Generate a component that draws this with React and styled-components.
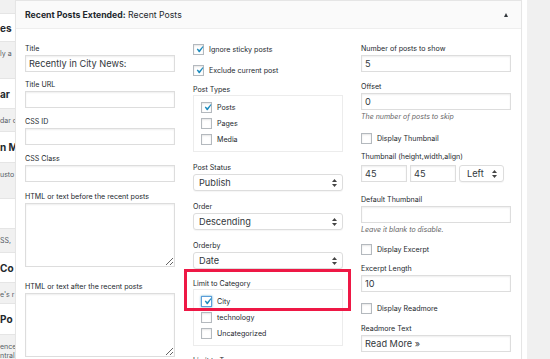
import React from 'react';
import styled, { createGlobalStyle } from 'styled-components';

const GlobalStyle = createGlobalStyle`
  html, body {
    margin: 0;
    padding: 0;
    background: #ffffff;
    font-family: Inter, "Liberation Sans", Arial, sans-serif;
    color: #23282d;
  }
  * { box-sizing: border-box; }
`;

const CheckMark = () => (
  <svg width="13" height="13" viewBox="0 0 20 20">
    <path
      d="M14.83 4.89l1.34.94-5.81 8.38H9.02L5.78 9.67l1.34-1.25 2.57 2.4z"
      fill="#1e8cbe"
    />
  </svg>
);

const SelectArrows = () => (
  <svg width="5" height="8" viewBox="0 0 5 8">
    <path d="M2.5 0L5 3H0z" fill="#444" />
    <path d="M2.5 8L5 5H0z" fill="#444" />
  </svg>
);

const strip = [
  { kind: 'desc', h: 13, text: '' },
  { kind: 'title', h: 29, text: 'es' },
  { kind: 'desc', h: 36, text: 'ly a' },
  { kind: 'title', h: 31, text: 'ar' },
  { kind: 'desc', h: 22, text: 'dar c' },
  { kind: 'title', h: 32, text: 'n Me' },
  { kind: 'desc', h: 35, text: 'usto' },
  { kind: 'title', h: 31, text: '' },
  { kind: 'desc', h: 23, text: 'SS,' },
  { kind: 'title', h: 31, text: 'Co' },
  { kind: 'desc', h: 20, text: "e's r" },
  { kind: 'title', h: 32, text: 'Po' },
  { kind: 'desc', h: 30, text: 'ence\nntral' },
];

const App = () => {
  return (
    <>
      <GlobalStyle />
      <Page>
        <LeftStrip>
          {strip.map((item, i) =>
            item.kind === 'title' ? (
              <StripTitle key={i} $h={item.h}>{item.text}</StripTitle>
            ) : (
              <StripDesc key={i} $h={item.h}>{item.text}</StripDesc>
            )
          )}
        </LeftStrip>

        <Main>
          <TopNote>Displays a list of recent posts by category, tag and type</TopNote>
          <Panel>
            <PanelHeader>
              <HeaderTitle>
                <strong>Recent Posts Extended:</strong> Recent Posts
              </HeaderTitle>
              <Toggle />
            </PanelHeader>

            <PanelBody>
              <Column>
                <Field $mb={8}>
                  <Label>Title</Label>
                  <TextInput readOnly value="Recently in City News:" />
                </Field>
                <Field $mb={9}>
                  <Label>Title URL</Label>
                  <TextInput readOnly value="" />
                </Field>
                <Field $mb={9}>
                  <Label>CSS ID</Label>
                  <TextInput readOnly value="" />
                </Field>
                <Field $mb={10}>
                  <Label>CSS Class</Label>
                  <TextInput readOnly value="" />
                </Field>
                <Field $mb={15}>
                  <Label>HTML or text before the recent posts</Label>
                  <TextArea readOnly value="" />
                </Field>
                <Field $mb={0}>
                  <Label>HTML or text after the recent posts</Label>
                  <TextArea readOnly value="" />
                </Field>
              </Column>

              <Column>
                <CheckRow $mb={10}>
                  <Box><CheckMark /></Box>
                  Ignore sticky posts
                </CheckRow>
                <CheckRow $mb={9}>
                  <Box><CheckMark /></Box>
                  Exclude current post
                </CheckRow>
                <Field $mb={11}>
                  <Label $tight>Post Types</Label>
                  <OptionBox>
                    <OptionRow><Box><CheckMark /></Box>Posts</OptionRow>
                    <OptionRow><Box />Pages</OptionRow>
                    <OptionRow><Box />Media</OptionRow>
                  </OptionBox>
                </Field>
                <Field $mb={11}>
                  <Label>Post Status</Label>
                  <Select>
                    <span>Publish</span>
                    <SelectArrows />
                  </Select>
                </Field>
                <Field $mb={11}>
                  <Label>Order</Label>
                  <Select>
                    <span>Descending</span>
                    <SelectArrows />
                  </Select>
                </Field>
                <Field $mb={10}>
                  <Label>Orderby</Label>
                  <Select>
                    <span>Date</span>
                    <SelectArrows />
                  </Select>
                </Field>
                <Field $mb={10} $marked>
                  <Highlight />
                  <Label $tight>Limit to Category</Label>
                  <OptionBox>
                    <OptionRow><Box $focus><CheckMark /></Box>City</OptionRow>
                    <OptionRow><Box />technology</OptionRow>
                    <OptionRow><Box />Uncategorized</OptionRow>
                  </OptionBox>
                </Field>
                <Field $mb={0}>
                  <Label>Limit to Tag</Label>
                </Field>
              </Column>

              <Column>
                <Field $mb={10}>
                  <Label>Number of posts to show</Label>
                  <TextInput readOnly value="5" />
                </Field>
                <Field $mb={11}>
                  <Label>Offset</Label>
                  <TextInput readOnly value="0" />
                  <Hint>The number of posts to skip</Hint>
                </Field>
                <CheckRow $mb={8}>
                  <Box />
                  Display Thumbnail
                </CheckRow>
                <Field $mb={13}>
                  <Label $gap={2}>Thumbnail (height,width,align)</Label>
                  <ThumbRow>
                    <TextInput readOnly value="45" />
                    <TextInput readOnly value="45" />
                    <Select $small>
                      <span>Left</span>
                      <SelectArrows />
                    </Select>
                  </ThumbRow>
                </Field>
                <Field $mb={9}>
                  <Label>Default Thumbnail</Label>
                  <TextInput readOnly value="" />
                  <Hint>Leave it blank to disable.</Hint>
                </Field>
                <CheckRow $mb={9}>
                  <Box />
                  Display Excerpt
                </CheckRow>
                <Field $mb={11}>
                  <Label>Excerpt Length</Label>
                  <TextInput readOnly value="10" />
                </Field>
                <CheckRow $mb={10}>
                  <Box />
                  Display Readmore
                </CheckRow>
                <Field $mb={0}>
                  <Label>Readmore Text</Label>
                  <TextInput readOnly value="Read More »" />
                </Field>
              </Column>
            </PanelBody>
          </Panel>
        </Main>

        <RightStrip />
      </Page>
    </>
  );
};

const Page = styled.div`
  display: flex;
  width: 550px;
  height: 359px;
  overflow: hidden;
`;

const LeftStrip = styled.div`
  width: 15px;
  flex-shrink: 0;
  display: flex;
  flex-direction: column;
  overflow: hidden;
`;

const StripTitle = styled.div`
  height: ${(p) => p.$h}px;
  flex-shrink: 0;
  background: #ffffff;
  border-top: 1px solid #e5e5e5;
  border-bottom: 1px solid #e5e5e5;
  display: flex;
  align-items: center;
  font-size: 10px;
  font-weight: 700;
  white-space: nowrap;
  color: #23282d;
`;

const StripDesc = styled.div`
  height: ${(p) => p.$h}px;
  flex-shrink: 0;
  background: #f1f1f1;
  padding-top: 7px;
  font-size: 7px;
  line-height: 9px;
  white-space: pre;
  color: #555d66;
`;

const Main = styled.div`
  width: 512px;
  flex-shrink: 0;
  display: flex;
  flex-direction: column;
  background: #ffffff;
`;

const TopNote = styled.div`
  height: 4px;
  overflow: hidden;
  padding-left: 12px;
  font-size: 7px;
  line-height: 1px;
  color: #555d66;
  white-space: nowrap;
`;

const Panel = styled.div`
  width: 507px;
  flex: 1;
  border: 1px solid #e5e5e5;
  border-bottom: none;
  background: #ffffff;
  box-shadow: 0 1px 1px rgba(0, 0, 0, 0.04);
  display: flex;
  flex-direction: column;
`;

const PanelHeader = styled.div`
  height: 28px;
  flex-shrink: 0;
  display: flex;
  align-items: center;
  justify-content: space-between;
  padding: 0 13px 0 9px;
  background: #fafafa;
  border-bottom: 1px solid #eeeeee;
`;

const HeaderTitle = styled.div`
  font-size: 8.7px;
  color: #23282d;
  white-space: nowrap;

  strong {
    font-weight: 700;
  }
`;

const Toggle = styled.span`
  width: 0;
  height: 0;
  border-left: 2.5px solid transparent;
  border-right: 2.5px solid transparent;
  border-bottom: 4px solid #32373c;
`;

const PanelBody = styled.div`
  display: grid;
  grid-template-columns: 150px 150px 150px;
  column-gap: 18px;
  padding: 15px 0 0 9px;
`;

const Column = styled.div`
  display: flex;
  flex-direction: column;
`;

const Field = styled.div`
  display: flex;
  flex-direction: column;
  margin-bottom: ${(p) => p.$mb}px;
  position: ${(p) => (p.$marked ? 'relative' : 'static')};
`;

const Label = styled.label`
  display: block;
  font-size: 7.1px;
  line-height: 10px;
  margin-bottom: ${(p) => (p.$tight ? 0 : p.$gap != null ? p.$gap + 1 : 1)}px;
  color: #23282d;
  white-space: nowrap;
`;

const TextInput = styled.input`
  width: 100%;
  height: 17px;
  margin: 0;
  padding: 0 3px;
  border: 1px solid #dddddd;
  border-radius: 0;
  background: #ffffff;
  box-shadow: inset 0 1px 2px rgba(0, 0, 0, 0.07);
  font-family: Inter, "Liberation Sans", Arial, sans-serif;
  font-size: 9.2px;
  color: #32373c;
  outline: none;
`;

const TextArea = styled.textarea`
  display: block;
  width: 100%;
  height: 64px;
  margin: 0;
  padding: 3px 4px;
  border: 1px solid #dddddd;
  border-radius: 0;
  background: #ffffff;
  box-shadow: inset 0 1px 2px rgba(0, 0, 0, 0.07);
  font-family: Inter, "Liberation Sans", Arial, sans-serif;
  font-size: 9px;
  outline: none;
`;

const Select = styled.div`
  height: 17px;
  display: flex;
  align-items: center;
  justify-content: space-between;
  padding: ${(p) => (p.$small ? '0 6px 0 7px' : '0 5px 0 5px')};
  border: 1px solid #dddddd;
  border-radius: 3px;
  background: #ffffff;
  box-shadow: 0 1px 1px rgba(0, 0, 0, 0.04);
  font-size: 9.2px;
  color: #32373c;
`;

const ThumbRow = styled.div`
  display: grid;
  grid-template-columns: 46px 46px 45px;
  column-gap: 3px;
`;

const Hint = styled.span`
  margin-top: 2px;
  font-size: 7px;
  line-height: 10px;
  font-style: italic;
  color: #666666;
  white-space: nowrap;
`;

const CheckRow = styled.div`
  display: flex;
  align-items: center;
  gap: 5px;
  height: 11px;
  margin-bottom: ${(p) => p.$mb}px;
  font-size: 7.1px;
  color: #23282d;
  white-space: nowrap;
`;

const OptionBox = styled.div`
  display: flex;
  flex-direction: column;
  gap: 5px;
  padding: 6px 7px 6px 7px;
  border: 1px solid #ececec;
  background: #ffffff;
`;

const OptionRow = styled.div`
  display: flex;
  align-items: center;
  gap: 5px;
  height: 11px;
  font-size: 7.1px;
  color: #23282d;
  white-space: nowrap;
`;

const Box = styled.span`
  position: relative;
  flex-shrink: 0;
  width: 11px;
  height: 11px;
  border: 1px solid ${(p) => (p.$focus ? '#5b9dd9' : '#b4b9be')};
  background: #ffffff;
  box-shadow: ${(p) =>
    p.$focus
      ? '0 0 2px rgba(30, 140, 190, 0.8)'
      : 'inset 0 1px 2px rgba(0, 0, 0, 0.1)'};

  svg {
    position: absolute;
    left: -1px;
    top: -2px;
  }
`;

const Highlight = styled.div`
  position: absolute;
  left: -9px;
  right: -8px;
  top: -10px;
  height: 42px;
  border: 3px solid #ee1845;
  z-index: 2;
  pointer-events: none;
`;

const RightStrip = styled.div`
  flex: 1;
  background: #f0f0f0;
`;

export default App;
